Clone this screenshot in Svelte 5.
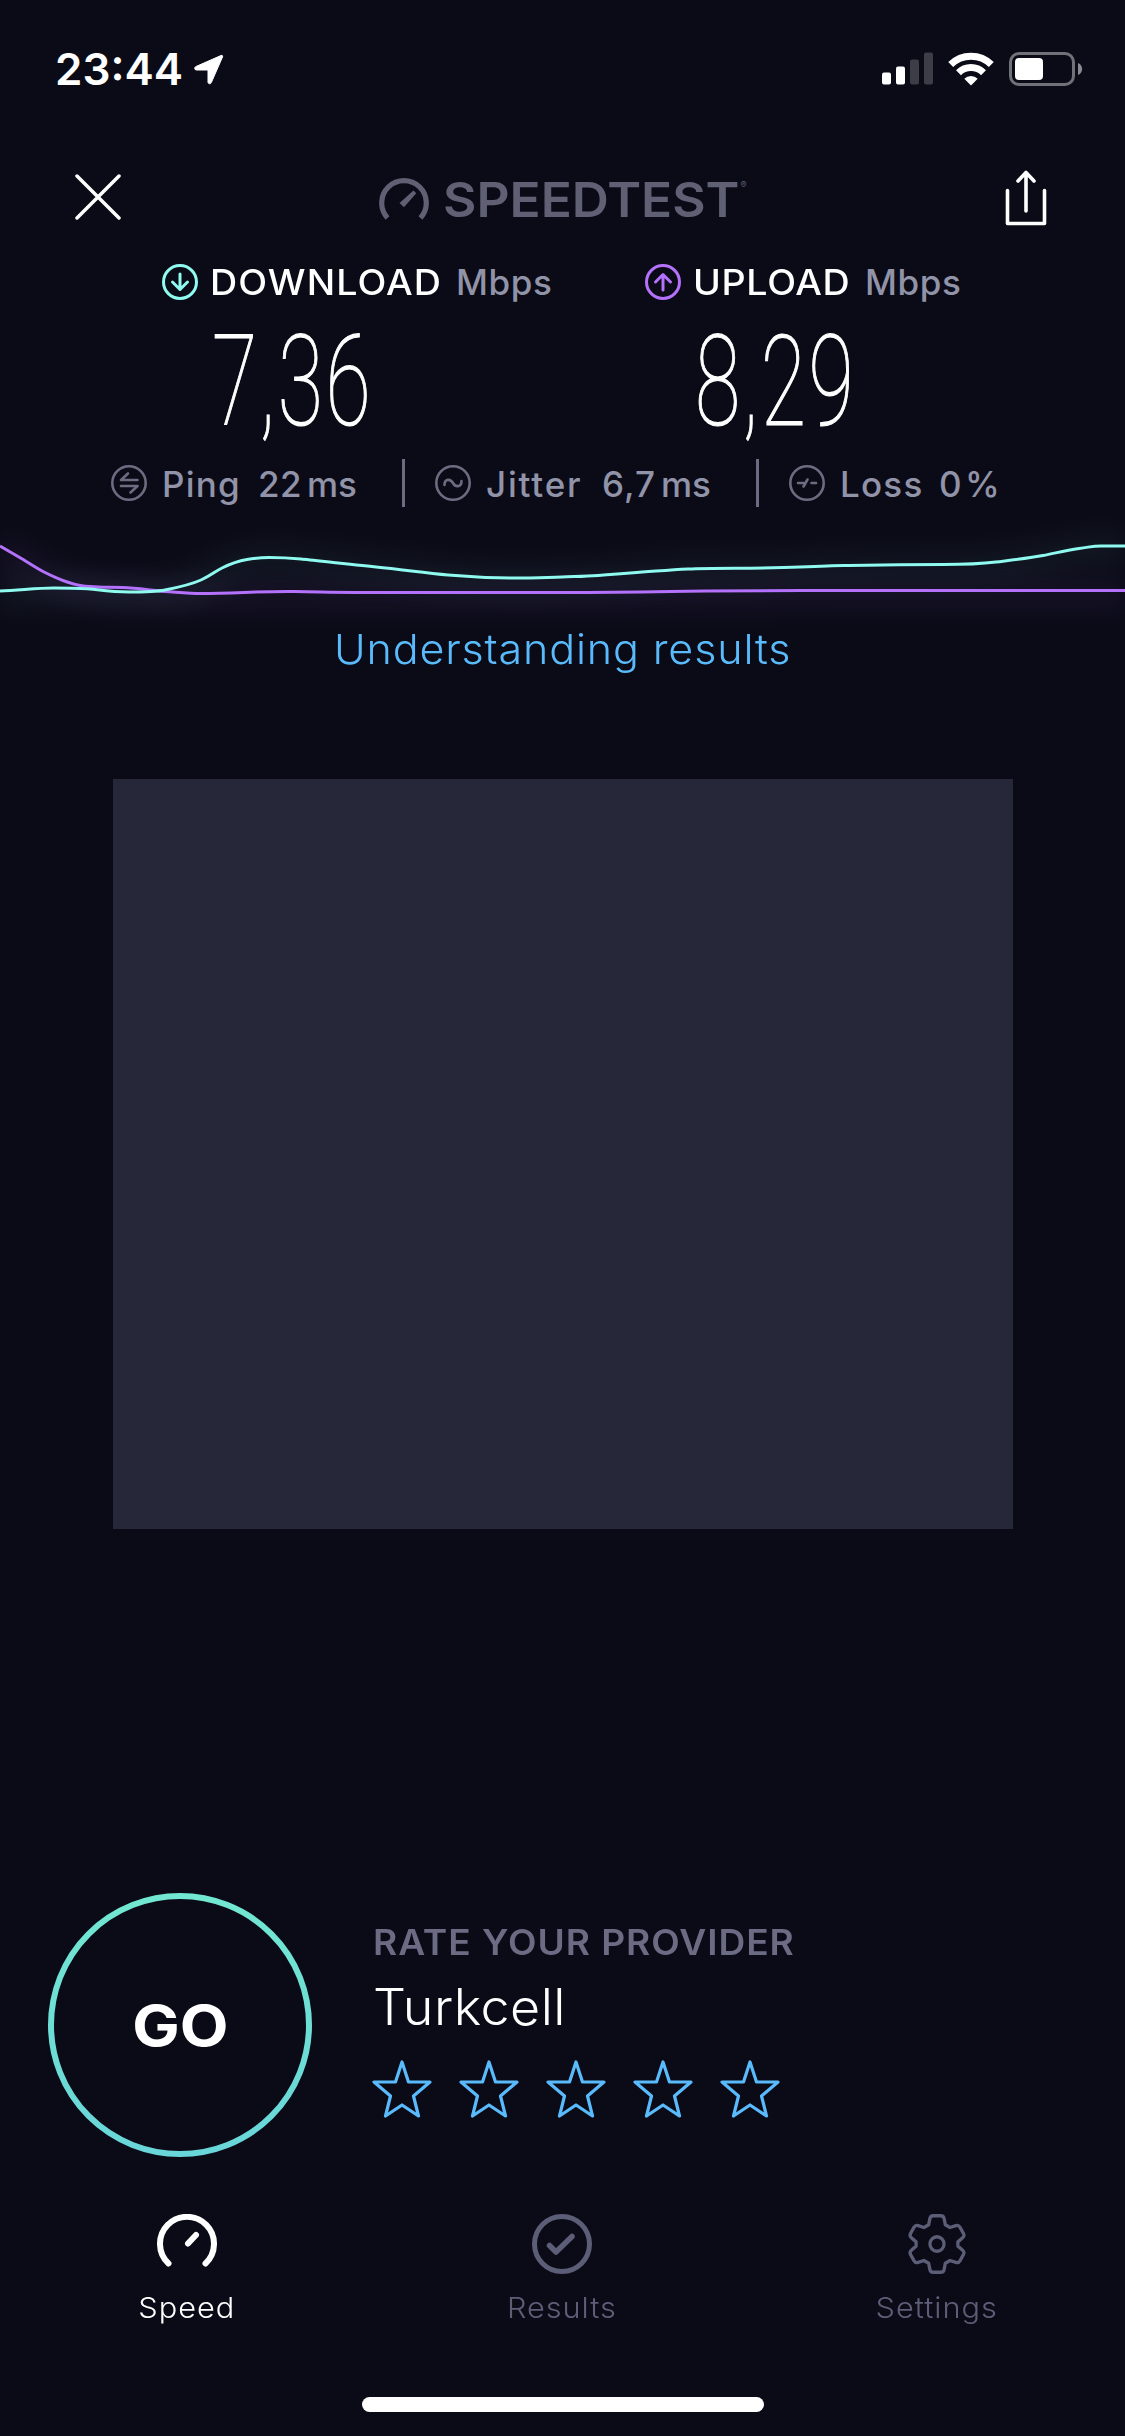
<script lang="ts">
	// Header numbers for the two directions
	const speeds = [
		{ id: 'download', label: 'DOWNLOAD', unit: 'Mbps', value: '7,36', color: '#8ffaf0', arrow: 'M18 10v15M10.5 18l7.5 7.5 7.5-7.5' },
		{ id: 'upload', label: 'UPLOAD', unit: 'Mbps', value: '8,29', color: '#b471fb', arrow: 'M18 26V11M10.5 18l7.5-7.5 7.5 7.5' }
	];

	const details = [
		{ id: 'ping', label: 'Ping', value: '22', unit: 'ms', icon: 'M17 8.5l-7 6.5h16.5M10 21h16.5l-7 6.5' },
		{ id: 'jitter', label: 'Jitter', value: '6,7', unit: 'ms', icon: 'M9.5 20c0-6.5 6-6.5 8.5-2s8.5 4.5 8.5-2' },
		{ id: 'loss', label: 'Loss', value: '0', unit: '%', icon: 'M9 18h5.5M14.5 21.500l4-7M22.500 18h4.500' }
	];

	const stars = [1, 2, 3, 4, 5];

	const downLine =
		'M0 51C20 50.500 34 48 54 48S80 48 90 49S112 52 129 52S155 52 165 50S190 45 201 40S214 32 222 28S238 21 247 19.500S262 17.500 269 17.500S290 18 301 19S350 24.500 376 27S425 33 448 35S495 38 520 38S550 37.500 562 37S585 36.500 598 35.500S660 30.500 688 29S760 29 800 27S849 25.500 849 25.500S920 24.500 943 24.500S980 24 996 22S1030 18 1043 15.500S1065 10.500 1079 8.500S1093 6 1101 6H1125';
	const upLine =
		'M0 6L24 20C32 25 38 29 45 32.500C60 40 74 46 90 46.500C102 47.500 110 47 122 47.500C140 48 150 50.500 165 51.500S190 53.500 201 53.500C235 53.500 260 51 295 51.500S350 52.500 380 52.500H562C640 52.500 680 51 706 51S800 50.500 850 50.500H1125';
</script>

<div class="screen">
	<div class="status-bar">
		<div class="clock">
			<span class="time">23:44</span>
			<svg class="location" viewBox="0 0 30 31">
				<path d="M27 1.500L2 12.500c-2 1-1.500 3.500.5 3.500h11.500v12c0 2 2.500 2.500 3.300.6L28.500 3c.5-1.200-.4-2-1.500-1.500z" fill="#fff" stroke="#fff" stroke-linejoin="round" />
			</svg>
		</div>
		<div class="indicators">
			<svg width="51" height="33" viewBox="0 0 51 33">
				<rect x="0" y="20.500" width="9" height="12" rx="2" fill="#fff" />
				<rect x="14" y="14.500" width="9" height="18" rx="2" fill="#fff" />
				<rect x="28" y="7.500" width="9" height="25" rx="2" fill="#3d3d47" />
				<rect x="42" y="0.500" width="9" height="32" rx="2" fill="#3d3d47" />
			</svg>
			<svg width="46" height="34" viewBox="0 0 46 34">
				<g fill="none" stroke="#fff" stroke-width="7">
					<path d="M2.700 12.600a29 29 0 0 1 40.600 0" />
					<path d="M10.500 20.700a17.800 17.800 0 0 1 25 0" />
				</g>
				<path d="M23 33.500l-6.700-6.800a9.500 9.500 0 0 1 13.400 0z" fill="#fff" />
			</svg>
			<svg width="74" height="34" viewBox="0 0 74 34">
				<rect x="1.500" y="1.500" width="63" height="31" rx="8.500" fill="none" stroke="#717179" stroke-width="3" />
				<rect x="6" y="6" width="28" height="22" rx="4" fill="#fff" />
				<path d="M69 11c5.500 2 5.500 10 0 12z" fill="#8a8a90" />
			</svg>
		</div>
	</div>

	<header class="header">
		<svg class="close" viewBox="0 0 46 46">
			<path d="M2 2l42 42M44 2L2 44" stroke="#fff" stroke-width="3.500" stroke-linecap="round" />
		</svg>
		<div class="logo">
			<svg class="logo-icon" viewBox="0 0 50 43">
				<path d="M8.500 41A22.300 22.300 0 1 1 41.500 41" fill="none" stroke="#5f6074" stroke-width="5.200" />
				<path d="M34.500 13.500l2.700 2.700L25 30.200l-4.500-4.300z" fill="#5f6074" />
			</svg>
			<span class="logo-text">SPEEDTEST</span><span class="reg">®</span>
		</div>
		<svg class="share" viewBox="0 0 42 56">
			<g fill="none" stroke="#fff" stroke-width="3.600" stroke-linecap="round" stroke-linejoin="round">
				<path d="M2.500 20.500v33h37v-33" />
				<path d="M21 41V3M13 11l8-8.500 8 8.500" />
			</g>
		</svg>
	</header>

	<section class="speeds">
		{#each speeds as speed (speed.id)}
			<div class="speed {speed.id}">
				<div class="speed-head">
					<svg class="round-icon" viewBox="0 0 36 36">
						<g fill="none" stroke={speed.color} stroke-width="3" stroke-linecap="round" stroke-linejoin="round">
							<circle cx="18" cy="18" r="16.500" />
							<path d={speed.arrow} />
						</g>
					</svg>
					<span class="speed-label">{speed.label}</span>
					<span class="speed-unit">{speed.unit}</span>
				</div>
				<div class="speed-value">{speed.value}</div>
			</div>
		{/each}
	</section>

	<section class="details">
		{#each details as item (item.id)}
			<div class="detail {item.id}">
				<svg class="round-icon" viewBox="0 0 36 36">
					<g fill="none" stroke="#6b6b82" stroke-width="2.600" stroke-linecap="round" stroke-linejoin="round">
						<circle cx="18" cy="18" r="16.700" />
						<path d={item.icon} />
					</g>
				</svg>
				<span class="detail-label">{item.label}</span>
				<span class="detail-value">{item.value}</span>
				<span class="detail-unit">{item.unit}</span>
			</div>
		{/each}
	</section>

	<svg class="chart" viewBox="0 -32 1125 120">
		<defs>
			<filter id="glow" filterUnits="userSpaceOnUse" x="-60" y="-60" width="1245" height="200">
				<feGaussianBlur stdDeviation="11" />
			</filter>
		</defs>
		<g fill="none">
			<path d={upLine} stroke="#b471fb" stroke-width="34" opacity="0.055" filter="url(#glow)" transform="translate(0 4)" />
			<path d={downLine} stroke="#8ffaf0" stroke-width="34" opacity="0.045" filter="url(#glow)" transform="translate(0 3)" />
			<path d={upLine} stroke="#b471fb" stroke-width="3" />
			<path d={downLine} stroke="#8ffaf0" stroke-width="3" />
		</g>
	</svg>

	<div class="link">Understanding results</div>

	<div class="ad"></div>

	<section class="provider">
		<div class="go">
			<svg class="go-ring" viewBox="0 0 264 264">
				<defs>
					<linearGradient id="ring" x1="0" y1="0" x2="0" y2="1">
						<stop offset="0" stop-color="#72e7d1" />
						<stop offset="1" stop-color="#69d6d9" />
					</linearGradient>
				</defs>
				<circle cx="132" cy="132" r="129" fill="none" stroke="url(#ring)" stroke-width="6" />
			</svg>
			<span class="go-text">GO</span>
		</div>
		<div class="rate">
			<div class="rate-title">RATE YOUR PROVIDER</div>
			<div class="rate-name">Turkcell</div>
			<div class="stars">
				{#each stars as star (star)}
					<svg width="60" height="58" viewBox="0 0 60 58">
						<path d="M30 2l6.500 20H58L41.500 36l5 20L30 45 13.500 56l5-20L2 22h21.500z" fill="none" stroke="#5abbfc" stroke-width="3.200" stroke-linejoin="round" />
					</svg>
				{/each}
			</div>
		</div>
	</section>

	<nav class="tabs">
		<div class="tab active">
			<svg width="60" height="60" viewBox="0 0 60 60">
				<g fill="none" stroke="#fff" stroke-width="6" stroke-linecap="round">
					<path d="M11.500 49.500A27 27 0 1 1 48.500 49.500" />
					<path d="M31 29.500l8-8.500" />
				</g>
			</svg>
			<span class="tab-label">Speed</span>
		</div>
		<div class="tab">
			<svg width="60" height="60" viewBox="0 0 60 60">
				<g fill="none" stroke="#5c5d77" stroke-linecap="round" stroke-linejoin="round">
					<circle cx="30" cy="30" r="27.500" stroke-width="5" />
					<path d="M17.500 31.500l6.500 6.500L40 22.500" stroke-width="5.500" />
				</g>
			</svg>
			<span class="tab-label">Results</span>
		</div>
		<div class="tab">
			<svg width="58" height="60" viewBox="0 0 60 60" preserveAspectRatio="none">
				<g fill="none" stroke="#5c5d77" stroke-width="3.400" stroke-linejoin="round">
					<path d="M26 1.700h8c2 0 3 1 3.400 3l1.200 6 4.900 2.800 6-1.900c1.900-.6 3.200-.1 4.200 1.600l3.600 6.200c1 1.700.7 3.100-.8 4.400l-4.900 4.100v4.200l4.900 4.100c1.500 1.300 1.800 2.700.8 4.400l-3.600 6.200c-1 1.700-2.300 2.200-4.200 1.600l-6-1.900-4.900 2.800-1.200 6c-.4 2-1.400 3-3.400 3h-8c-2 0-3-1-3.400-3l-1.200-6-4.900-2.800-6 1.900c-1.900.6-3.200.1-4.200-1.600L2.700 40.600c-1-1.700-.7-3.100.8-4.400l4.900-4.100v-4.200l-4.900-4.100c-1.500-1.300-1.800-2.700-.8-4.400l3.600-6.200c1-1.700 2.300-2.200 4.200-1.600l6 1.900 4.900-2.800 1.200-6c.4-2 1.400-3 3.400-3z" />
					<circle cx="30" cy="30" r="7.300" />
				</g>
			</svg>
			<span class="tab-label">Settings</span>
		</div>
	</nav>

	<div class="home-indicator"></div>
</div>

<style>
	:global(body) {
		margin: 0;
		background: #0b0b17;
	}

	.screen {
		width: 1125px;
		height: 2436px;
		display: flex;
		flex-direction: column;
		background: #0b0b17;
		color: #fff;
		font-family: 'Inter', 'Liberation Sans', sans-serif;
		overflow: hidden;
		white-space: nowrap;
	}

	svg {
		display: block;
		flex: none;
	}

	.status-bar {
		height: 138px;
		box-sizing: border-box;
		padding: 52px 42px 0 55px;
		display: flex;
		justify-content: space-between;
		align-items: flex-start;
	}
	.clock {
		display: flex;
		gap: 11px;
	}
	.time {
		width: 128px;
		font-size: 44px;
		line-height: 34px;
		font-weight: 600;
	}
	.location {
		width: 30px;
		height: 31px;
		margin-top: 2px;
	}
	.indicators {
		display: flex;
		gap: 15px;
	}

	.header {
		height: 122px;
		box-sizing: border-box;
		padding: 32px 78px 0 75px;
		display: flex;
		justify-content: space-between;
		align-items: flex-start;
	}
	.close {
		width: 46px;
		height: 46px;
		margin-top: 4px;
	}
	.logo {
		width: 369px;
		margin-top: 7px;
		display: flex;
		align-items: flex-start;
	}
	.logo-icon {
		width: 50px;
		height: 43px;
	}
	.logo-text {
		width: 298px;
		margin-left: 14px;
		font-size: 48px;
		line-height: 45px;
		font-weight: 600;
		color: #5f6074;
		transform: scaleX(1.07);
		transform-origin: 0 0;
	}
	.reg {
		font-size: 9px;
		line-height: 16px;
		color: #5f6074;
	}
	.share {
		width: 42px;
		height: 56px;
	}

	.speeds {
		height: 198px;
		display: flex;
		padding-left: 162px;
	}
	.speed.download {
		width: 483px;
	}
	.speed-head {
		height: 44px;
		display: flex;
		align-items: center;
	}
	.round-icon {
		width: 36px;
		height: 36px;
	}
	.speed-label {
		margin-left: 12px;
		font-size: 35px;
		font-weight: 500;
		letter-spacing: 1px;
		transform: scaleX(1.075);
		transform-origin: 0 0;
	}
	.download .speed-label {
		width: 246px;
	}
	.upload .speed-label {
		width: 172px;
		letter-spacing: 0.6px;
	}
	.speed-unit {
		font-size: 35px;
		font-weight: 500;
		letter-spacing: 0.6px;
		color: #9193a8;
	}
	.speed-value {
		margin: 15px 0 0 50px;
		font-family: 'Roboto', sans-serif;
		font-size: 127px;
		line-height: 126px;
		font-weight: 100;
		letter-spacing: 4px;
		-webkit-text-stroke: 1.2px #fff;
		transform: scaleX(0.65);
		transform-origin: 0 0;
	}

	.details {
		height: 50px;
		padding-left: 111px;
		display: flex;
		align-items: center;
		color: #9193a8;
		font-size: 35px;
		font-weight: 500;
	}
	.detail {
		height: 48px;
		box-sizing: border-box;
		display: flex;
		align-items: center;
	}
	.detail span {
		padding-top: 2px;
	}
	.detail.ping {
		width: 294px;
		border-right: 3px solid #6b6b82;
	}
	.detail.jitter {
		width: 354px;
		padding-left: 30px;
		border-right: 3px solid #6b6b82;
	}
	.detail.loss {
		padding-left: 30px;
	}
	.detail-label {
		margin-left: 15px;
		letter-spacing: 1.2px;
	}
	.ping .detail-label {
		width: 96px;
	}
	.jitter .detail-label {
		width: 116px;
		letter-spacing: 1.8px;
	}
	.loss .detail-label {
		width: 99px;
	}
	.detail-value {
		margin-right: 5px;
		letter-spacing: 0.4px;
	}
	.jitter .detail-value {
		letter-spacing: 1px;
	}
	.loss .detail-value {
		margin-right: 3px;
	}

	.chart {
		width: 1125px;
		height: 120px;
		overflow: visible;
	}

	.link {
		height: 151px;
		padding-left: 334px;
		font-size: 41px;
		line-height: 42px;
		font-weight: 300;
		letter-spacing: 0.8px;
		color: #5abbfc;
		transform: scaleX(1.05);
		transform-origin: 334px 0;
	}

	.ad {
		width: 900px;
		height: 750px;
		margin-left: 113px;
		background: #262739;
		flex: none;
	}

	.provider {
		height: 321px;
		padding: 364px 0 0 48px;
		display: flex;
		flex: none;
	}
	.go {
		width: 264px;
		height: 264px;
		display: grid;
		place-items: center;
	}
	.go-ring,
	.go-text {
		grid-area: 1 / 1;
	}
	.go-ring {
		width: 264px;
		height: 264px;
	}
	.go-text {
		font-size: 57px;
		font-weight: 700;
		transform: scaleX(1.11);
	}
	.rate {
		padding: 28px 0 0 61px;
	}
	.rate-title {
		font-size: 35px;
		line-height: 42px;
		font-weight: 600;
		letter-spacing: 0.9px;
		color: #6b6b84;
		transform: scaleX(1.06);
		transform-origin: 0 0;
	}
	.rate-name {
		margin-top: 13px;
		font-size: 50px;
		line-height: 62px;
		font-weight: 300;
		letter-spacing: 0.5px;
		transform: scaleX(1.04);
		transform-origin: 0 0;
	}
	.stars {
		margin: 22px 0 0 -1px;
		display: flex;
		gap: 27px;
	}

	.tabs {
		height: 183px;
		margin-left: -1px;
		display: flex;
		flex: none;
	}
	.tab {
		width: 375px;
		display: flex;
		flex-direction: column;
		align-items: center;
		gap: 16px;
		color: #5c5d77;
	}
	.tab.active {
		color: #fff;
	}
	.tab-label {
		padding-left: 1px;
		font-size: 29px;
		line-height: 36px;
		font-weight: 300;
		letter-spacing: 0.9px;
		transform: scaleX(1.06);
	}

	.home-indicator {
		width: 402px;
		height: 15px;
		margin-left: 362px;
		border-radius: 8px;
		background: #fff;
		flex: none;
	}
</style>
